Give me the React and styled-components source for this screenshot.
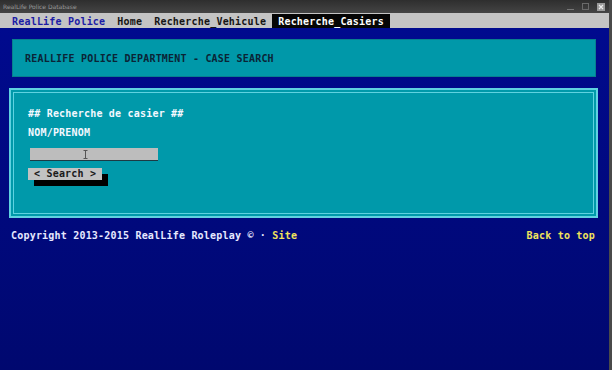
import React from 'react'
import styled, { createGlobalStyle } from 'styled-components'

const GlobalStyle = createGlobalStyle`
  html, body {
    margin: 0;
    padding: 0;
    background: #000a8c;
  }
`

const Window = styled.div`
  width: 612px;
  height: 370px;
  display: flex;
  flex-direction: column;
  box-sizing: border-box;
  border-right: 3px solid #4a4a4a;
  font-family: "DejaVu Sans Mono", "Liberation Mono", monospace;
  font-weight: bold;
  font-size: 10px;
  letter-spacing: 0.2px;
  overflow: hidden;
`

const TitleBar = styled.div`
  height: 13px;
  flex: none;
  display: flex;
  align-items: center;
  justify-content: space-between;
  padding: 0 4px 0 3px;
  background: linear-gradient(#2e2e2e, #444);
`

const TitleText = styled.span`
  font-family: "DejaVu Sans", sans-serif;
  font-weight: normal;
  font-size: 6px;
  letter-spacing: 0;
  color: #9a9a9a;
`

const Controls = styled.div`
  display: flex;
  align-items: center;
  gap: 8px;
`

const MenuBar = styled.div`
  height: 15px;
  flex: none;
  display: flex;
  align-items: stretch;
  padding-left: 6px;
  background: #c4c4c4;
`

const MenuItem = styled.div`
  display: flex;
  align-items: center;
  padding: 0 6px;
  margin-top: 1px;
  color: ${(props) => (props.active ? '#fff' : props.brand ? '#1c1ca6' : '#151515')};
  background: ${(props) => (props.active ? '#050505' : 'transparent')};
`

const Main = styled.div`
  flex: 1;
  display: flex;
  flex-direction: column;
  background: linear-gradient(#000a8e, #00086f);
  padding-top: 11px;
`

const Header = styled.div`
  height: 38px;
  margin: 0 13px 0 12px;
  box-sizing: border-box;
  display: flex;
  align-items: center;
  padding-left: 12px;
  background: #0098a9;
  border: 1px solid #087f8e;
  color: #0b2436;
`

const FormBox = styled.div`
  height: 130px;
  margin: 11px 11px 0 9px;
  box-sizing: border-box;
  display: flex;
  padding: 2px;
  background: #0099aa;
  border: 2px solid #5fd2e0;
`

const FormInner = styled.div`
  flex: 1;
  display: flex;
  flex-direction: column;
  align-items: flex-start;
  padding: 15px 14px 0;
  border: 1px solid #5fd2e0;
`

const Label = styled.div`
  line-height: 12px;
  color: #f4f8ff;
  margin-bottom: ${(props) => props.gap}px;
`

const InputWrap = styled.div`
  position: relative;
  margin-left: 2px;
  margin-bottom: 7px;
`

const Field = styled.div`
  width: 128px;
  height: 12px;
  background: #bdbdbd;
  border-bottom: 1px solid #1d3a44;
`

const Cursor = styled.svg`
  position: absolute;
  left: 53px;
  top: 2px;
`

const Button = styled.div`
  width: 74px;
  height: 12px;
  line-height: 12px;
  padding-left: 6px;
  box-sizing: border-box;
  background: #c2c2c2;
  color: #1a1a1a;
  box-shadow: 6px 6px 0 #000;
`

const Footer = styled.div`
  display: flex;
  justify-content: space-between;
  line-height: 12px;
  margin-top: 12px;
  padding: 0 14px 0 11px;
  color: #e6e8ff;
`

const Link = styled.span`
  color: #f1e35c;
`

const App = () => {
  return (
    <Window>
      <GlobalStyle />
      <TitleBar>
        <TitleText>RealLife Police Database</TitleText>
        <Controls>
          <svg width="7" height="8" viewBox="0 0 7 8">
            <rect x="0" y="6" width="7" height="1" fill="#777" />
          </svg>
          <svg width="7" height="8" viewBox="0 0 7 8">
            <rect x="0.5" y="0.5" width="6" height="6" fill="none" stroke="#6a6a6a" />
          </svg>
          <svg width="8" height="8" viewBox="0 0 8 8">
            <rect x="0" y="0" width="8" height="8" fill="#9a9a9a" />
            <path d="M2 2 L6 6 M6 2 L2 6" stroke="#eee" strokeWidth="1.2" />
          </svg>
        </Controls>
      </TitleBar>
      <MenuBar>
        <MenuItem brand>RealLife Police</MenuItem>
        <MenuItem>Home</MenuItem>
        <MenuItem>Recherche_Vehicule</MenuItem>
        <MenuItem active>Recherche_Casiers</MenuItem>
      </MenuBar>
      <Main>
        <Header>REALLIFE POLICE DEPARTMENT - CASE SEARCH</Header>
        <FormBox>
          <FormInner>
            <Label gap={7}>## Recherche de casier ##</Label>
            <Label gap={9}>NOM/PRENOM</Label>
            <InputWrap>
              <Field />
              <Cursor width="5" height="9" viewBox="0 0 5 9">
                <path d="M0.5 0.5 H4.5 M2.5 0.5 V8.5 M0.5 8.5 H4.5" stroke="#555" strokeWidth="1" fill="none" />
              </Cursor>
            </InputWrap>
            <Button>&lt; Search &gt;</Button>
          </FormInner>
        </FormBox>
        <Footer>
          <span>
            Copyright 2013-2015 RealLife Roleplay © · <Link>Site</Link>
          </span>
          <Link>Back to top</Link>
        </Footer>
      </Main>
    </Window>
  )
}

export default App
